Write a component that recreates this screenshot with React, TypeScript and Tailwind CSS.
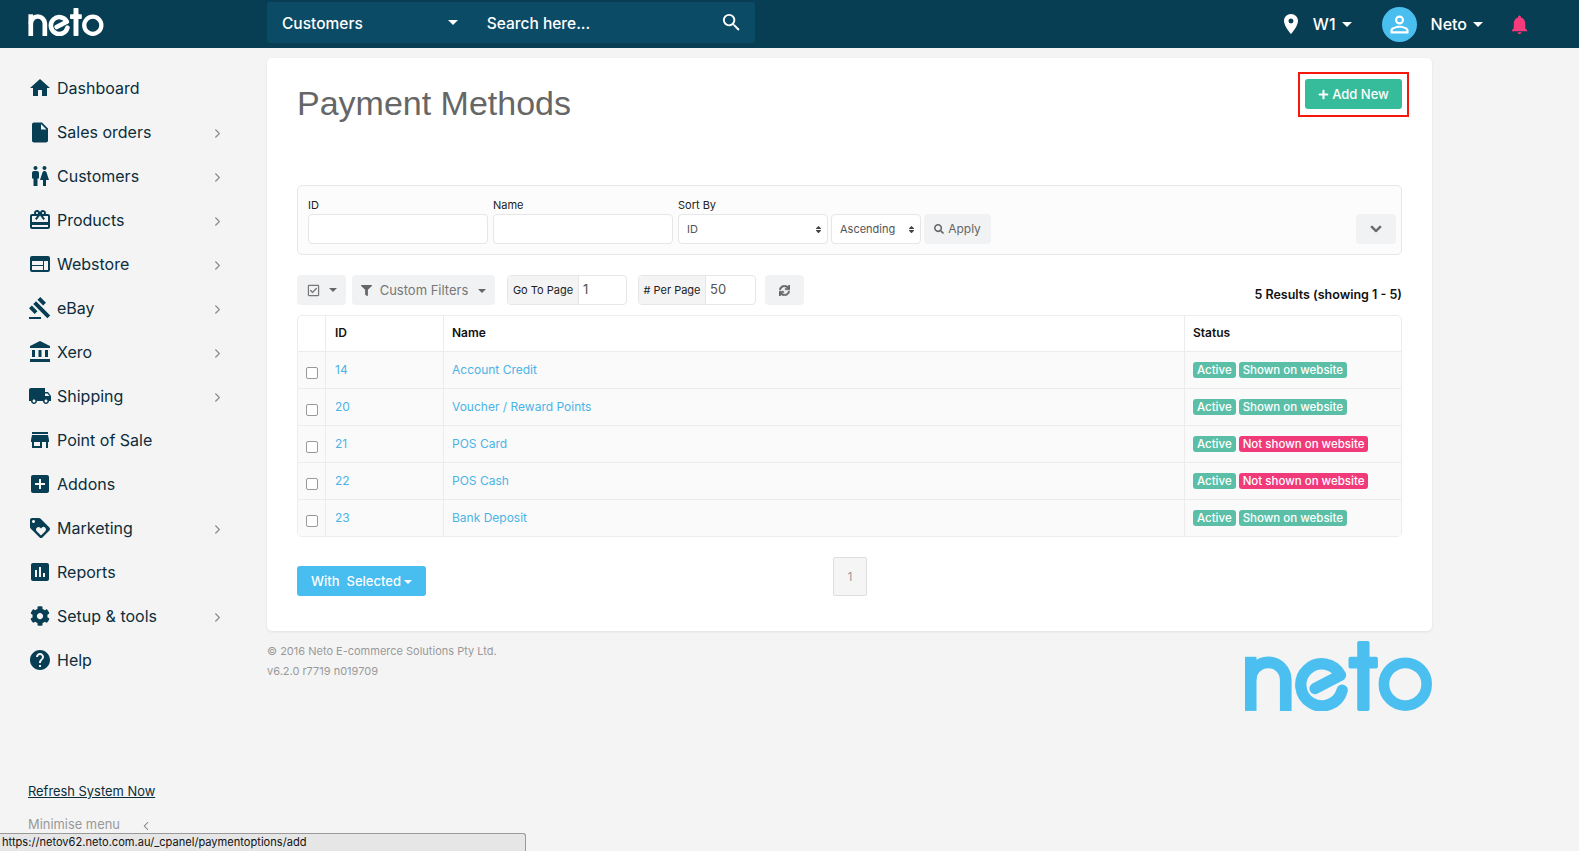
import React from 'react';
import {
  MdHome, MdInsertDriveFile, MdWc, MdCardGiftcard, MdWeb, MdGavel, MdAccountBalance, MdLocalShipping,
  MdStore, MdAddBox, MdLoyalty, MdAssessment, MdHelp, MdPlace, MdPersonOutline, MdNotifications, MdSearch,
} from 'react-icons/md';
import { FaCog, FaPlus, FaSearch, FaChevronDown, FaRegCheckSquare, FaFilter, FaSync, FaSort } from 'react-icons/fa';
import { ChevronRight, ChevronLeft } from 'lucide-react';

const navItems = [
  { label: 'Dashboard', icon: MdHome, more: false, size: 24 },
  { label: 'Sales orders', icon: MdInsertDriveFile, more: true, size: 25 },
  { label: 'Customers', icon: MdWc, more: true, size: 24 },
  { label: 'Products', icon: MdCardGiftcard, more: true, size: 24 },
  { label: 'Webstore', icon: MdWeb, more: true, size: 24 },
  { label: 'eBay', icon: MdGavel, more: true, size: 24 },
  { label: 'Xero', icon: MdAccountBalance, more: true, size: 24 },
  { label: 'Shipping', icon: MdLocalShipping, more: true, size: 26 },
  { label: 'Point of Sale', icon: MdStore, more: false, size: 24 },
  { label: 'Addons', icon: MdAddBox, more: false, size: 24 },
  { label: 'Marketing', icon: MdLoyalty, more: true, size: 24 },
  { label: 'Reports', icon: MdAssessment, more: false, size: 24 },
  { label: 'Setup & tools', icon: FaCog, more: true, size: 20 },
  { label: 'Help', icon: MdHelp, more: false, size: 24 },
];

const rows = [
  { id: '14', name: 'Account Credit', shown: true },
  { id: '20', name: 'Voucher / Reward Points', shown: true },
  { id: '21', name: 'POS Card', shown: false },
  { id: '22', name: 'POS Cash', shown: false },
  { id: '23', name: 'Bank Deposit', shown: true },
];

function NetoLogo({ className }: { className: string }) {
  return (
    <svg viewBox="0 0 560 209" className={className} fill="none" stroke="currentColor">
      <path d="M17 209V47" strokeWidth="35" />
      <path d="M17 116A52.5 52.5 0 0 1 122 116V209" strokeWidth="35" />
      <path d="M210 142L286 102A63 63 0 1 0 291 147" strokeWidth="34" strokeLinecap="round" strokeLinejoin="round" />
      <rect x="336" y="0" width="37" height="209" rx="6" fill="currentColor" stroke="none" />
      <rect x="310" y="47" width="88" height="35" rx="6" fill="currentColor" stroke="none" />
      <circle cx="480" cy="129" r="64" strokeWidth="32" />
    </svg>
  );
}

function Caret({ className }: { className: string }) {
  return <span className={`inline-block w-0 h-0 border-x-[4px] border-x-transparent border-t-[4px] ${className}`} />;
}

function Filter({ label, width, children }: { label: string; width: string; children: React.ReactNode }) {
  return (
    <div className={`flex flex-col ${width}`}>
      <label className="text-[11px] leading-[14px] mb-[2px] text-[#222]">{label}</label>
      {children}
    </div>
  );
}

function Badge({ color, children }: { color: string; children: React.ReactNode }) {
  return <span className={`h-4 px-1 rounded-[3px] text-white text-[11.5px] leading-4 font-medium ${color}`}>{children}</span>;
}

export default function App() {
  return (
    <div className="relative h-[851px] overflow-hidden flex flex-col bg-[#f4f4f4] [font-family:Inter,sans-serif] text-[#222]">
      <header className="h-12 shrink-0 flex items-center bg-[#083e53] text-white">
        <div className="w-[267px] shrink-0 pl-7 -mt-1">
          <NetoLogo className="w-[76px] h-[28px] text-white" />
        </div>
        <div className="w-[488px] h-[41px] -mt-[3px] flex items-center rounded-[3px] bg-[#0b4b66] pl-[15px] pr-[12px]">
          <span className="text-[15.5px] font-medium pt-[3px]">Customers</span>
          <Caret className="border-t-white ml-[85px] border-x-[5px] border-t-[5px]" />
          <span className="ml-[29px] text-[15.5px] font-medium flex-1 pt-[2px]">Search here...</span>
          <MdSearch size={23} />
        </div>
        <div className="flex-1 flex items-center justify-end pr-[48px]">
          <MdPlace size={24} className="mr-[10px]" />
          <span className="text-[16px] font-medium">W1</span>
          <Caret className="border-t-white ml-[6px] border-x-[5px] border-t-[5px]" />
          <span className="ml-[30px] w-[35px] h-[35px] rounded-full bg-[#4bbef0] flex items-center justify-center">
            <MdPersonOutline size={27} />
          </span>
          <span className="ml-[14px] text-[16px] font-medium">Neto</span>
          <Caret className="border-t-white ml-[6px] border-x-[5px] border-t-[5px]" />
          <MdNotifications size={23} className="ml-[25px] text-[#f63b7c]" />
        </div>
      </header>

      <div className="flex-1 flex min-h-0">
        <aside className="w-[267px] shrink-0 flex flex-col pt-[18px] pl-7 pb-[16px]">
          {navItems.map((item) => (
            <div key={item.label} className="h-[44px] flex items-center text-[16px] text-[#0c2d3b]">
              <span className="w-6 h-6 flex items-center justify-center text-[#083e53] mr-[5px] shrink-0">
                <item.icon size={item.size} />
              </span>
              <span className="w-[150px]">{item.label}</span>
              {item.more && <ChevronRight size={15} strokeWidth={1.75} className="ml-[3px] mt-[2px] text-[#8a8a8a]" />}
            </div>
          ))}
          <a className="mt-auto text-[12.9px] leading-5 underline text-[#0c2d3b]">Refresh System Now</a>
          <div className="mt-[13px] flex items-center text-[12.9px] leading-5 text-[#999]">
            <span className="w-[111px]">Minimise menu</span>
            <ChevronLeft size={14} strokeWidth={1.75} className="text-[#777] mt-[2px]" />
          </div>
        </aside>

        <main className="w-[1165px] shrink-0 pt-[10px]">
          <section className="h-[573px] bg-white rounded-[5px] shadow-[0_1px_3px_rgba(0,0,0,0.08)] pt-[14px] px-[30px]">
            <div className="h-[113px] flex justify-between items-start">
              <h1 className="mt-[9px] text-[34px] leading-[44px] text-[#666] [font-family:'Liberation_Sans',sans-serif]">Payment Methods</h1>
              <div className="border-2 border-[#f5180c] pt-[5px] px-[5px] pb-[6px] -mr-[7px]">
                <button className="w-[97px] h-[30px] rounded-[3px] bg-[#36bb9b] text-white text-[13px] font-medium flex items-center justify-center gap-[3px] pt-[1px]">
                  <FaPlus size={11} />
                  Add New
                </button>
              </div>
            </div>

            <div className="h-[70px] flex items-end gap-[5px] border border-[#e6e6e6] rounded-[5px] bg-[#fcfcfc] pl-[10px] pr-[5px] pb-[10px]">
              <Filter label="ID" width="w-[180px]">
                <input className="h-[30px] border border-[#e6e6e6] rounded-[4px] bg-white" />
              </Filter>
              <Filter label="Name" width="w-[180px]">
                <input className="h-[30px] border border-[#e6e6e6] rounded-[4px] bg-white" />
              </Filter>
              <Filter label="Sort By" width="w-[150px]">
                <div className="h-[30px] flex items-center justify-between border border-[#e6e6e6] rounded-[4px] bg-white pl-2 pr-1 text-[11px] text-[#555]">
                  ID
                  <FaSort size={9} className="text-[#444]" />
                </div>
              </Filter>
              <div className="w-[90px] -ml-[2px] h-[30px] flex items-center justify-between border border-[#e6e6e6] rounded-[4px] bg-white pl-2 pr-1 text-[11px] text-[#555]">
                Ascending
                <FaSort size={9} className="text-[#444]" />
              </div>
              <button className="ml-[-2px] w-[67px] h-[30px] flex items-center justify-center gap-1 rounded-[4px] bg-[#f1f2f3] text-[12px] text-[#666]">
                <FaSearch size={10} />
                Apply
              </button>
              <button className="ml-auto w-10 h-[30px] flex items-center justify-center rounded-[4px] bg-[#f1f2f3] text-[#666]">
                <FaChevronDown size={12} className="stroke-current stroke-[30]" />
              </button>
            </div>

            <div className="mt-5 h-[30px] flex items-center text-[12px]">
              <button className="w-[49px] h-[30px] flex items-center justify-center gap-[9px] rounded-[4px] bg-[#f1f2f3] text-[#777]">
                <FaRegCheckSquare size={13} />
                <Caret className="border-t-[#666]" />
              </button>
              <button className="ml-[6px] w-[143px] h-[30px] flex items-center justify-center gap-2 rounded-[4px] bg-[#f1f2f3] text-[#777] text-[13px] pt-[1px]">
                <FaFilter size={11} className="text-[#666]" />
                Custom Filters
                <Caret className="border-t-[#666] ml-[2px]" />
              </button>
              <div className="ml-3 w-[120px] h-[30px] flex border border-[#e6e6e6] rounded-[4px] overflow-hidden">
                <span className="w-[71px] flex items-center justify-center bg-[#f4f4f4] border-r border-[#e6e6e6] text-[11px]">Go To Page</span>
                <input readOnly defaultValue="1" className="w-[47px] pl-[4px] text-[13px] text-[#555] outline-none" />
              </div>
              <div className="ml-[11px] w-[118px] h-[30px] flex border border-[#e6e6e6] rounded-[4px] overflow-hidden">
                <span className="w-[67px] flex items-center justify-center bg-[#f4f4f4] border-r border-[#e6e6e6] text-[11px]">#&nbsp;Per Page</span>
                <input readOnly defaultValue="50" className="w-[48px] pl-[4px] text-[13px] text-[#555] outline-none" />
              </div>
              <button className="ml-[9px] w-[39px] h-[30px] flex items-center justify-center rounded-[4px] bg-[#f1f2f3] text-[#666]">
                <FaSync size={11} className="stroke-current stroke-[24]" />
              </button>
              <span className="ml-auto mt-[10px] font-semibold text-[12.5px] text-[#111]">5 Results (showing 1 - 5)</span>
            </div>

            <div className="mt-[10px] border border-[#ececec] rounded-[5px] overflow-hidden text-[12px]">
              <div className="h-[35px] flex items-center font-semibold text-[#111]">
                <div className="w-[27px] h-full" />
                <div className="w-[118px] h-full flex items-center pl-[9px] pb-[2px] border-l border-[#ececec]">ID</div>
                <div className="w-[741px] h-full flex items-center pl-[8px] pb-[2px] border-l border-[#ececec]">Name</div>
                <div className="flex-1 h-full flex items-center pl-[8px] pb-[2px] border-l border-[#ececec]">Status</div>
              </div>
              {rows.map((row) => (
                <div key={row.id} className="h-[37px] flex items-center border-t border-[#ececec] bg-[#fafafa]">
                  <div className="w-[27px] h-full flex items-center justify-center pt-[5px] pl-[1px]">
                    <input type="checkbox" className="appearance-none w-3 h-3 border border-[#999] rounded-[2px] bg-white" />
                  </div>
                  <div className="w-[118px] h-full flex items-center pl-[9px] border-l border-[#ececec] text-[#4bb4e6]">{row.id}</div>
                  <div className="w-[741px] h-full flex items-center pl-[8px] border-l border-[#ececec] text-[#4bb4e6]">{row.name}</div>
                  <div className="flex-1 h-full flex items-center gap-[3px] pl-[8px] border-l border-[#ececec]">
                    <Badge color="bg-[#5bbfa7]">Active</Badge>
                    {row.shown ? <Badge color="bg-[#5bbfa7]">Shown on website</Badge> : <Badge color="bg-[#f03a7a]">Not shown on website</Badge>}
                  </div>
                </div>
              ))}
            </div>

            <div className="mt-5 flex items-end">
              <button className="w-[129px] h-[30px] rounded-[3px] bg-[#47bdf0] text-white text-[13px] font-medium flex items-center justify-center gap-[3px] pt-[1px]">
                With&nbsp; Selected
                <Caret className="border-t-white border-x-[3px] border-t-[3px]" />
              </button>
              <div className="ml-[407px] w-[34px] h-[39px] flex items-center justify-center border border-[#ddd] rounded-[2px] bg-[#f5f5f5] text-[12px] text-[#999]">1</div>
            </div>
          </section>

          <footer className="flex justify-between items-start">
            <div className="mt-[10px] text-[11px] leading-5 text-[#999]">
              <p>© 2016 Neto E-commerce Solutions Pty Ltd.</p>
              <p>v6.2.0 r7719 n019709</p>
            </div>
            <NetoLogo className="mt-[10px] w-[187px] h-[70px] text-[#4bc0f0]" />
          </footer>
        </main>
      </div>

      <div className="absolute left-0 bottom-0 w-[526px] h-[18px] flex items-center pl-[2px] bg-[#e6e6e6] border border-l-0 border-b-0 border-[#999] rounded-tr-[3px] text-[11.1px] text-[#111]">
        https://netov62.neto.com.au/_cpanel/paymentoptions/add
      </div>
    </div>
  );
}
